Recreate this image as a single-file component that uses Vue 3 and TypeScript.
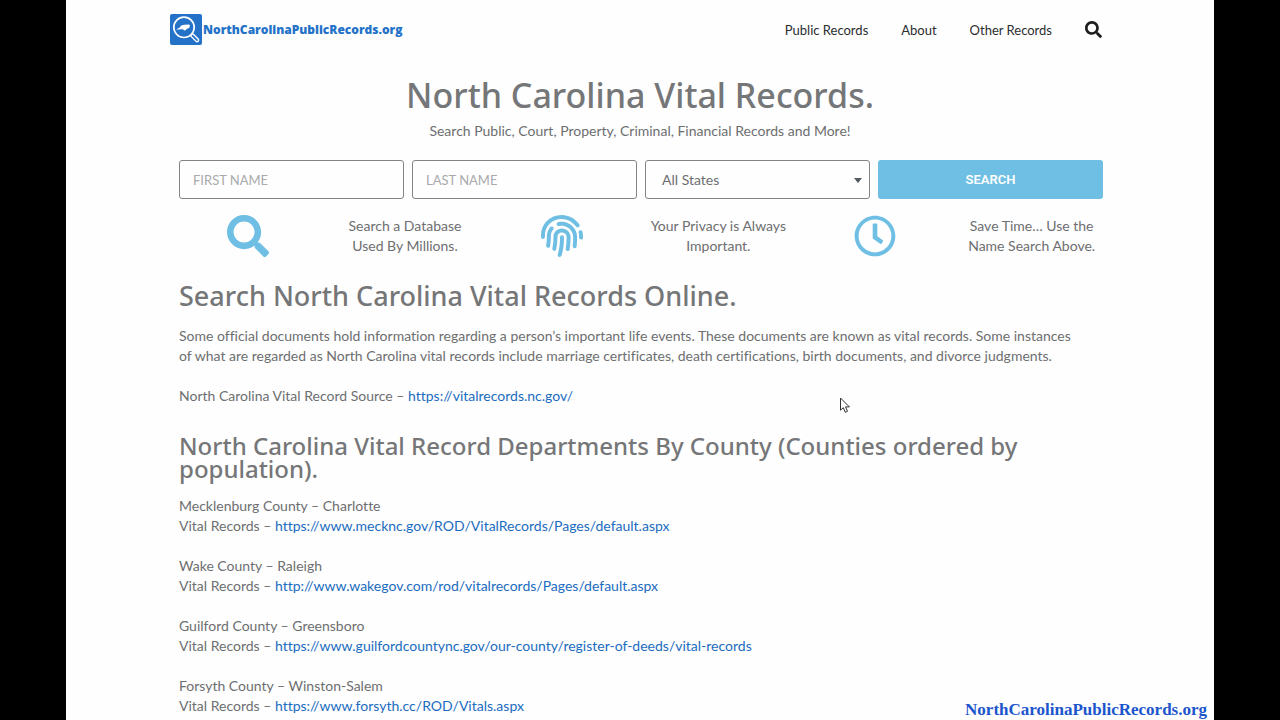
<script setup lang="ts">
import { ref } from 'vue'

interface County {
  name: string
  seat: string
  url: string
}

const firstName = ref('')
const lastName = ref('')
const state = ref('All States')
const states = ['All States', 'North Carolina', 'South Carolina', 'Virginia']

const menu = ['Public Records', 'About', 'Other Records']

const counties: County[] = [
  { name: 'Mecklenburg County', seat: 'Charlotte', url: 'https://www.mecknc.gov/ROD/VitalRecords/Pages/default.aspx' },
  { name: 'Wake County', seat: 'Raleigh', url: 'http://www.wakegov.com/rod/vitalrecords/Pages/default.aspx' },
  { name: 'Guilford County', seat: 'Greensboro', url: 'https://www.guilfordcountync.gov/our-county/register-of-deeds/vital-records' },
  { name: 'Forsyth County', seat: 'Winston-Salem', url: 'https://www.forsyth.cc/ROD/Vitals.aspx' },
]

const searchPath =
  'M505 442.7L405.3 343c-4.5-4.5-10.6-7-17-7H372c27.6-35.3 44-79.7 44-128C416 93.1 322.9 0 208 0S0 93.1 0 208s93.1 208 208 208c48.3 0 92.7-16.4 128-44v16.3c0 6.4 2.5 12.5 7 17l99.7 99.7c9.4 9.4 24.6 9.4 33.9 0l28.3-28.3c9.4-9.4 9.4-24.6.1-34zM208 336c-70.7 0-128-57.2-128-128 0-70.7 57.2-128 128-128 70.7 0 128 57.2 128 128 0 70.7-57.2 128-128 128z'
const fingerprintPath =
  'M256.12 245.96c-13.25 0-24 10.74-24 24 1.14 72.25-8.14 141.9-27.7 211.55-2.73 9.72 2.15 30.49 23.12 30.49 10.48 0 20.11-6.92 23.09-17.52 13.53-47.91 31.04-125.41 29.48-224.52.01-13.25-10.73-24-23.99-24zm-.86-81.73C194 164.16 151.25 211.3 152.1 265.32c.75 47.94-3.75 95.91-13.37 142.55-2.69 12.98 5.67 25.69 18.64 28.36 13.05 2.67 25.67-5.66 28.36-18.64 10.34-50.09 15.17-101.58 14.37-153.02-.41-25.95 19.92-52.49 54.45-52.34 31.31.47 57.15 25.34 57.62 55.47.77 48.05-2.81 96.33-10.61 143.55-2.17 13.06 6.69 25.42 19.76 27.58 19.97 3.33 26.81-15.1 27.58-19.77 8.28-50.03 12.06-101.21 11.27-152.11-.88-55.8-47.94-101.88-104.91-102.72zm-110.69-19.78c-10.3-8.34-25.37-6.8-33.76 3.48-25.62 31.5-39.39 71.28-38.75 112 .59 37.58-2.47 75.27-9.11 112.05-2.34 13.05 6.31 25.53 19.36 27.89 20.11 3.5 27.07-14.81 27.89-19.36 7.19-39.84 10.5-80.66 9.86-121.33-.47-29.88 9.2-57.88 28-80.97 8.35-10.28 6.79-25.39-3.49-33.76zm109.47-62.33c-15.41-.41-30.87 1.44-45.78 4.97-12.89 3.06-20.87 15.98-17.83 28.89 3.06 12.89 16 20.83 28.89 17.83 11.05-2.61 22.47-3.77 34-3.69 75.43 1.13 137.73 61.5 138.88 134.58.59 37.88-1.28 76.11-5.58 113.63-1.5 13.17 7.95 25.08 21.11 26.58 16.72 1.95 25.51-11.88 26.58-21.11a929.06 929.06 0 0 0 5.89-119.85c-1.56-98.75-85.07-180.33-186.16-181.83zm252.07 121.45c-2.86-12.92-15.51-21.2-28.61-18.27-12.94 2.86-21.12 15.66-18.26 28.61 4.71 21.41 4.91 37.41 4.7 61.6-.11 13.27 10.55 24.09 23.8 24.2h.2c13.17 0 23.89-10.61 24-23.8.18-22.18.4-44.11-5.83-72.34zm-40.12-90.72C417.29 43.46 337.6 1.29 252.81.02 183.02-.82 118.47 24.91 70.46 72.94 24.09 119.37-.9 181.04.14 246.65l-.12 21.47c-.39 13.25 10.03 24.31 23.28 24.69.23.02.48.02.72.02 12.92 0 23.59-10.3 23.97-23.3l.16-23.64c-.83-52.5 19.16-101.86 56.28-139 38.76-38.8 91.34-59.67 147.68-58.86 69.45 1.03 134.73 35.56 174.62 92.39 7.61 10.86 22.56 13.45 33.42 5.86 10.84-7.62 13.46-22.59 5.84-33.43z'
const clockPath =
  'M256 8C119 8 8 119 8 256s111 248 248 248 248-111 248-248S393 8 256 8zm0 448c-110.5 0-200-89.5-200-200S145.5 56 256 56s200 89.5 200 200-89.5 200-200 200zm61.8-104.4l-84.9-61.7c-3.1-2.3-4.9-5.9-4.9-9.7V116c0-6.6 5.4-12 12-12h32c6.6 0 12 5.4 12 12v141.7l66.8 48.6c5.4 3.9 6.5 11.4 2.6 16.8L334.6 349c-3.9 5.3-11.4 6.5-16.8 2.6z'

const features = [
  { icon: searchPath, lines: ['Search a Database', 'Used By Millions.'] },
  { icon: fingerprintPath, lines: ['Your Privacy is Always', 'Important.'] },
  { icon: clockPath, lines: ['Save Time… Use the', 'Name Search Above.'] },
]
</script>

<template>
  <div class="stage">
    <div class="page">
      <div class="container">
        <header class="header">
          <a class="brand" href="#">
            <svg class="brand-mark" viewBox="0 0 32 31" aria-hidden="true">
              <rect width="32" height="31" rx="2" fill="#2372c8" />
              <path d="M20.5 19.5l6.6 6.6" stroke="#fff" stroke-width="4.4" stroke-linecap="round" />
              <path d="M22.5 21.6l4.5 4.5" stroke="#2372c8" stroke-width="1.8" stroke-linecap="round" />
              <circle cx="14" cy="13.3" r="10.2" fill="#2372c8" stroke="#fff" stroke-width="1.7" />
              <path d="M6 15.4l3.4-1.6 1.9-2.2 3-.8 5-.3.7 1.6-1 1.9-2.4 1-1.6 1.7-2.2-1.4-2.4-.1-1.2.3z" fill="#fff" />
            </svg>
            <span>NorthCarolinaPublicRecords.org</span>
          </a>
          <nav class="menu">
            <a v-for="item in menu" :key="item" href="#">{{ item }}</a>
            <button class="menu-search" type="button" aria-label="Search">
              <svg viewBox="0 0 512 512" aria-hidden="true"><path :d="searchPath" fill="currentColor" /></svg>
            </button>
          </nav>
        </header>

        <main>
          <section class="hero">
            <h1>North Carolina Vital Records.</h1>
            <p>Search Public, Court, Property, Criminal, Financial Records and More!</p>
          </section>

          <form class="search" @submit.prevent>
            <input v-model="firstName" type="text" placeholder="FIRST NAME" aria-label="First name" />
            <input v-model="lastName" type="text" placeholder="LAST NAME" aria-label="Last name" />
            <div class="select">
              <select v-model="state" aria-label="State">
                <option v-for="s in states" :key="s">{{ s }}</option>
              </select>
              <svg class="caret" viewBox="0 0 8 5" aria-hidden="true"><path d="M0 0h8L4 5z" fill="#54595f" /></svg>
            </div>
            <button type="submit">SEARCH</button>
          </form>

          <section class="features">
            <template v-for="f in features" :key="f.lines[0]">
              <svg class="feature-icon" viewBox="0 0 512 512" aria-hidden="true"><path :d="f.icon" fill="currentColor" /></svg>
              <p>{{ f.lines[0] }}<br />{{ f.lines[1] }}</p>
            </template>
          </section>

          <article class="article">
            <h2>Search North Carolina Vital Records Online.</h2>
            <p>
              Some official documents hold information regarding a person’s important life events. These documents are known as vital records. Some instances<br />
              of what are regarded as North Carolina vital records include marriage certificates, death certifications, birth documents, and divorce judgments.
            </p>
            <p>North Carolina Vital Record Source – <a href="https://vitalrecords.nc.gov/">https://vitalrecords.nc.gov/</a></p>
            <h2 class="second">North Carolina Vital Record Departments By County (Counties ordered by population).</h2>
            <p v-for="c in counties" :key="c.name">
              {{ c.name }} – {{ c.seat }}<br />
              Vital Records – <a :href="c.url">{{ c.url }}</a>
            </p>
          </article>
        </main>
      </div>

      <div class="watermark">NorthCarolinaPublicRecords.org</div>
      <svg class="pointer" viewBox="0 0 10 17" aria-hidden="true">
        <path d="M.5 1v12.2l2.8-2.5 2 4.6 2.2-1-2-4.4h3.9z" fill="#fff" stroke="#333" stroke-width="1" />
      </svg>
    </div>
  </div>
</template>

<style>
body {
  margin: 0;
  background: #000;
}
</style>

<style scoped>
.stage {
  height: 100vh;
  overflow: hidden;
  padding: 0 66px;
  background: #000;
}
.page {
  position: relative;
  height: 100%;
  overflow: hidden;
  background: #fefefe;
  color: #6d6e70;
  font: 14px/20px Lato, "Open Sans", sans-serif;
  font-variant-ligatures: none;
}
.container {
  max-width: 940px;
  margin: 0 auto;
}
.header {
  display: flex;
  align-items: center;
  justify-content: space-between;
  height: 59px;
  padding-right: 8px;
}
.brand {
  display: flex;
  align-items: center;
  gap: 1px;
  color: #2372c8;
  font: 800 12px/20px "Open Sans", sans-serif;
  text-decoration: none;
}
.brand-mark {
  width: 32px;
  height: 31px;
}
.menu {
  display: flex;
  align-items: center;
  gap: 33px;
  font-size: 13px;
}
.menu a {
  color: #2b2d2f;
  text-decoration: none;
}
.menu-search {
  display: flex;
  padding: 0;
  border: 0;
  background: none;
  color: #1c1e1f;
}
.menu-search svg {
  width: 17px;
  height: 17px;
}
.hero {
  text-align: center;
}
h1,
h2,
p {
  margin: 0;
}
h1 {
  padding-top: 18px;
  color: #757678;
  font-family: "Noto Sans", sans-serif;
  font-size: 34px;
  font-weight: 500;
  line-height: 36px;
}
.hero p {
  margin-top: 8px;
}
.search {
  display: grid;
  grid-template-columns: repeat(4, 1fr);
  gap: 8px;
  padding: 0 7px 0 9px;
  margin-top: 19px;
}
.search input,
.search select,
.search button {
  box-sizing: border-box;
  width: 100%;
  height: 39px;
  border: 1px solid #818385;
  border-radius: 3px;
  background: #fefefe;
  color: #6d6e70;
  font: 13px/20px Lato, "Open Sans", sans-serif;
}
.search input {
  padding: 0 13px;
}
.search input::placeholder {
  color: #a9aaac;
  opacity: 1;
}
.select {
  position: relative;
}
.search select {
  padding: 0 16px;
  appearance: none;
  font-size: 14px;
}
.caret {
  position: absolute;
  top: 18px;
  right: 8px;
  width: 8px;
  height: 5px;
  pointer-events: none;
}
.search button {
  border: 0;
  background: #6fbee3;
  color: #fff;
  font: 600 13px/20px Roboto, sans-serif;
}
.features {
  display: grid;
  grid-template-columns: repeat(6, 1fr);
  align-items: center;
  justify-items: center;
  margin-top: 16px;
  text-align: center;
  white-space: nowrap;
}
.feature-icon {
  width: 42px;
  height: 42px;
  color: #6fbee3;
}
.article {
  padding: 0 7px 0 9px;
}
h2 {
  margin: 27px 0 18px;
  color: #757678;
  font-family: "Noto Sans", sans-serif;
  font-size: 27px;
  font-weight: 500;
  line-height: 24px;
}
.article p {
  margin-bottom: 20px;
}
h2.second {
  margin: 28px 0 16px;
  font-size: 24px;
  line-height: 23px;
}
a {
  color: #1b6cc0;
  text-decoration: none;
}
.watermark {
  position: absolute;
  right: 7px;
  bottom: 0;
  color: #1c55cc;
  font: 700 17px/20px "Liberation Serif", serif;
}
.pointer {
  position: absolute;
  top: 397px;
  left: 774px;
  width: 10px;
  height: 17px;
}
</style>
